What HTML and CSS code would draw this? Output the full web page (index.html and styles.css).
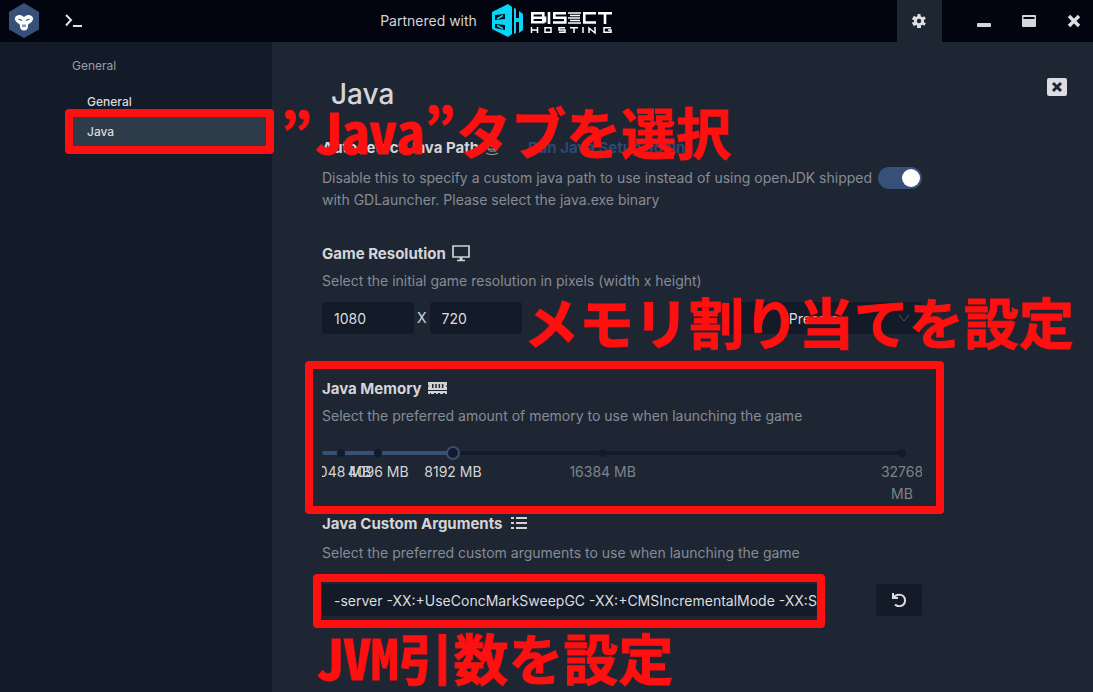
FILE: index.html
```html
<!DOCTYPE html>
<html lang="en">
<head>
<meta charset="utf-8">
<title>GDLauncher - Java settings</title>
<meta name="viewport" content="width=device-width, initial-scale=1">
<link rel="stylesheet" href="styles.css">
</head>
<body>
<header class="titlebar">
  <div class="titlebar-left">
    <svg class="logo" viewBox="0 0 32 36" width="32" height="36" aria-label="GDLauncher">
      <path fill="#375077" d="M16 0 31 9v17.500L16 35 1 26.500V9z"/>
      <path fill="#fff" d="M16 14c-2-1.500-4-2.500-6.500-1.500C6 13.500 6.500 17 8.500 19c1.500 1.500 3.500 1.500 3.500 4 0 3 1.500 4.500 4 4.500s4-1.500 4-4.500c0-2.500 2-2.500 3.500-4 2-2 2.500-5.500-1-6.500-2.500-1-4.500 0-6.500 1.500z"/>
      <path stroke="#375077" stroke-width="1.200" d="m10.500 16 3.500 1.500m7.500-1.500-3.500 1.500m-3 4v2.500m2-2.500v2.500"/>
    </svg>
    <button class="icon-btn" aria-label="Terminal">
      <svg viewBox="0 0 18 14" width="18" height="14" fill="none" stroke="#e0e0e2" stroke-width="2"><path d="m1 1 5 5-5 5.500M8 12h9"/></svg>
    </button>
  </div>
  <div class="partner">
    <span>Partnered with</span>
    <svg viewBox="0 0 122 36" width="122" height="36" role="img" aria-label="Bisect Hosting">
      <path fill="#06d5f7" fill-rule="evenodd" d="M17 2 1 10v17l16 8 4-3V5zM4 13l10-1v5L4 18zm0 9 10 1v5L4 26z"/>
      <path stroke="#06d5f7" stroke-width="1.500" d="m6 17 6-3.500M6 23.500l6 3"/>
      <path fill="#06d5f7" d="m23 6 2 1v9h3V9l4 3v16l-4 3V20h-3v11l-2 1z"/>
      <path fill="none" stroke="#fff" stroke-width="2.600" d="M41.300 11.300h11v9h-11zm0 4.500H54v4.700M58 10v12M75 11.300H63.300v4.500h11v4.700H62M105 11.300H93.300v9.200H105M107 11.300h14M114 12v10"/>
      <path stroke="#fff" stroke-width="1.500" d="M77 11h13M79 13.500h10M77 16h12M79 18.500h10M77 21h13"/>
      <path fill="none" stroke="#fff" stroke-width="1.500" d="M40.500 25v6m6-6v6m-6-3h6M54 25.700h6v4.600h-6zM74 25.700h-6V28h6v2.300h-6M79 25.700h8M83 25.700V31M92 25v6M98 31v-5l6 5v-6M120 25.700h-7v4.600h7V28h-3"/>
    </svg>
  </div>
  <nav class="window-controls">
    <button class="icon-btn active" aria-label="Settings">
      <svg viewBox="0 0 14 14" width="14" height="14"><g fill="#dedee0"><circle cx="7" cy="7" r="5"/><path d="M5.500 0h3l.5 14H5z"/><path d="M5.500 0h3l.5 14H5z" transform="rotate(60 7 7)"/><path d="M5.500 0h3l.5 14H5z" transform="rotate(120 7 7)"/></g><circle cx="7" cy="7" r="2.200" fill="#1e2633"/></svg>
    </button>
    <button class="icon-btn" aria-label="Minimize">
      <svg viewBox="0 0 14 14" width="14" height="14"><rect y="9" width="14" height="4" rx="1" fill="#d6d6da"/></svg>
    </button>
    <button class="icon-btn" aria-label="Maximize">
      <svg viewBox="0 0 14 14" width="14" height="14"><rect y="1" width="14" height="12" rx="1" fill="#d6d6da"/><path fill="#02040f" d="M1.500 3h11v2h-11z"/></svg>
    </button>
    <button class="icon-btn" aria-label="Close">
      <svg viewBox="0 0 14 14" width="14" height="14"><path d="m2 2 10 10M12 2 2 12" stroke="#dedee0" stroke-width="3.400"/></svg>
    </button>
  </nav>
</header>

<div class="layout">
  <aside class="sidebar">
    <h2>General</h2>
    <a href="#general">General</a>
    <a href="#java" class="selected">Java</a>
  </aside>

  <main class="main">
    <div class="content">
      <h1>Java</h1>

      <section class="autodetect">
        <h3>Autodetect Java Path
          <svg viewBox="0 0 14 16" width="14" height="16" fill="none" stroke="#a9adb3"><path d="M7 1c3 2-3 3 0 6M9 4c-2 1 1 2-1 3M3 9h7c-1 3-6 3-7 0zm7 0c3-1 2 3-1 2M1 13c3 2 9 2 12 0"/></svg>
          <a href="#setup">Run Java Setup again</a>
        </h3>
        <div class="row">
          <label for="auto">Disable this to specify a custom java path to use instead of using openJDK shipped with GDLauncher. Please select the java.exe binary</label>
          <input class="switch" id="auto" type="checkbox" role="switch" checked>
        </div>
      </section>

      <section class="resolution">
        <h3>Game Resolution
          <svg viewBox="0 0 18 18" width="18" height="18" fill="none" stroke="#d0d2d4" stroke-width="1.700"><path d="M1 1h16v11H1zM5 15.500h8"/><path stroke-width="3" d="M9 12v3"/></svg>
        </h3>
        <p>Select the initial game resolution in pixels (width x height)</p>
        <div class="row">
          <div class="size">
            <input class="field" type="text" value="1080" aria-label="Width">
            <span>X</span>
            <input class="field" type="text" value="720" aria-label="Height">
          </div>
          <div class="select">
            <select class="field" aria-label="Presets"><option>Presets</option></select>
            <svg viewBox="0 0 12 8" width="12" height="8" fill="none" stroke="#4f5763"><path d="m1 1 5 6 5-6"/></svg>
          </div>
        </div>
      </section>

      <section class="memory">
        <h3><label for="mem">Java Memory</label>
          <svg viewBox="0 0 20 16" width="20" height="16"><path fill="#d0d2d4" fill-rule="evenodd" d="M0 1h19v3l-1 1 1 1v3H0V6l1-1-1-1zm4 2v4h1.500V3zm3.300 0v4h1.500V3zm3.300 0v4h1.500V3zm3.300 0v4h1.500V3zM0 10h19v3h-2v-1h-2v1h-3v-1h-2v1H8v-1H6v1H3v-1H2v1H0z"/></svg>
        </h3>
        <p>Select the preferred amount of memory to use when launching the game</p>
        <div class="slider">
          <div class="rail">
            <div class="fill" style="width:22.580%"></div>
            <i style="left:3.230%"></i><i style="left:9.680%"></i><i style="left:48.390%"></i><i style="left:100%"></i>
            <input id="mem" type="range" min="1024" max="32768" value="8192">
          </div>
          <div class="marks">
            <span class="on" style="left:3.230%">2048 MB</span>
            <span class="on" style="left:9.680%">4096 MB</span>
            <span class="on" style="left:22.580%">8192 MB</span>
            <span style="left:48.390%">16384 MB</span>
            <span class="last" style="left:100%">32768 MB</span>
          </div>
        </div>
      </section>

      <section class="arguments">
        <h3><label for="args">Java Custom Arguments</label>
          <svg viewBox="0 0 20 16" width="20" height="16" stroke="#d0d2d4" stroke-width="2"><path d="M3 2h3M3 7h3M3 12h3M8 2h11M8 7h11M8 12h11"/></svg>
        </h3>
        <p>Select the preferred custom arguments to use when launching the game</p>
        <div class="row">
          <input class="field args" id="args" type="text" value="-server -XX:+UseConcMarkSweepGC -XX:+CMSIncrementalMode -XX:SurvivorRatio=8">
          <button class="reset" aria-label="Reset arguments">
            <svg viewBox="0 0 14 14" width="14" height="14" fill="none" stroke="#dedee0" stroke-width="2"><path d="M1 0v5h5M1.500 4.500C5 0 13 1 13 7.500c0 6-7 7-10 4"/></svg>
          </button>
        </div>
      </section>
    </div>
    <button class="close" aria-label="Close settings">
      <svg viewBox="0 0 20 18" width="20" height="18"><rect width="20" height="18" rx="2" fill="#dcdce2"/><path d="m6 5 8 8m0-8-8 8" stroke="#1e2633" stroke-width="3"/></svg>
    </button>
  </main>
</div>

<div class="frame frame-tab"></div>
<div class="frame frame-memory"></div>
<div class="frame frame-args"></div>
<div class="note note-tab" lang="ja"><span>”</span><span>Java”タブを選択</span></div>
<div class="note note-memory" lang="ja">メモリ割り当てを設定</div>
<div class="note note-args" lang="ja">JVM引数を設定</div>
</body>
</html>
```
FILE: styles.css
```css
* { box-sizing: border-box; }

body {
  margin: 0;
  min-height: 100vh;
  position: relative;
  display: flex;
  flex-direction: column;
  overflow: hidden;
  background: #1e2633;
  color: #d4d5d8;
  font: 14px/22px Inter, "Noto Sans CJK JP", sans-serif;
}

h1, h2, h3, p { margin: 0; }
button { border: 0; padding: 0; background: none; cursor: pointer; }
a { text-decoration: none; }
svg { flex: none; }

.titlebar {
  display: flex;
  justify-content: space-between;
  height: 42px;
  background: #02040f;
}
.titlebar-left { display: flex; align-items: center; gap: 11px; padding-left: 8px; }
.icon-btn {
  width: 45px;
  display: flex;
  align-items: center;
  justify-content: center;
}
.icon-btn.active { background: #1e2633; margin-right: 20px; }
.partner { display: flex; align-items: center; gap: 14px; }
.partner svg { margin-top: -2px; }
.window-controls { display: flex; justify-content: flex-end; margin-right: -4px; }

.layout { flex: 1; display: flex; }
.sidebar {
  width: 272px;
  flex: none;
  padding: 13px 0 0 72px;
  background: #131a28;
  display: flex;
  flex-direction: column;
  font-size: 12px;
}
.sidebar h2 { font-size: 12px; font-weight: 400; color: #9a9fa6; margin-bottom: 10px; }
.sidebar a { height: 30px; padding-left: 15px; line-height: 30px; color: #dadbdd; font-weight: 500; }
.sidebar a.selected { background: #2d3c48; }

.main {
  flex: 1;
  display: flex;
  justify-content: space-between;
  align-items: flex-start;
  padding: 36px 26px 0 50px;
}
.content { width: 600px; }
.close { display: flex; }
h1 { padding-left: 9px; font-size: 28px; line-height: 32px; font-weight: 500; }
h3 { display: flex; align-items: center; gap: 6px; font-size: 15px; line-height: 22px; font-weight: 700; }
h3 a { margin-left: 23px; color: #2f4872; }
p, .row label { font-size: 14px; color: #868c94; }
.row { display: flex; align-items: center; justify-content: space-between; }

.autodetect { margin-top: 27px; }
.autodetect .row { align-items: flex-start; margin-top: 8px; }
.autodetect label { width: 552px; }
.switch {
  appearance: none;
  width: 44px;
  height: 22px;
  margin: 0;
  padding: 2px;
  border-radius: 11px;
  background: #375077;
}
.switch::before {
  content: "";
  display: block;
  width: 18px;
  height: 18px;
  margin-left: auto;
  border-radius: 50%;
  background: #fff;
}

.resolution { margin-top: 32px; }
.resolution p, .memory p, .arguments p { margin-top: 5px; }
.resolution .row { margin-top: 10px; }
.size { display: flex; align-items: center; gap: 3px; }
.field {
  width: 92px;
  height: 32px;
  padding: 0 12px;
  border: 0;
  border-radius: 3px;
  background: #131a28;
  color: #dcdddf;
  font: 14px Inter, sans-serif;
}
.select { position: relative; width: 195px; }
.select select { appearance: none; width: 100%; padding: 0 34px 0 12px; text-align: center; }
.select svg { position: absolute; right: 12px; top: 12px; pointer-events: none; }

.memory { margin-top: 44px; }
.slider { margin-top: 19px; padding-right: 20px; overflow: hidden; }
.rail { position: relative; height: 14px; background: linear-gradient(#131a28, #131a28) center / 100% 4px no-repeat; }
.fill { position: absolute; left: 0; top: 5px; height: 4px; border-radius: 2px; background: #375077; }
.rail i {
  position: absolute;
  top: 3px;
  width: 8px;
  height: 8px;
  margin-left: -4px;
  border-radius: 50%;
  background: #131a28;
}
.rail input {
  appearance: none;
  position: absolute;
  left: -7px;
  top: 0;
  width: calc(100% + 14px);
  height: 14px;
  margin: 0;
  background: none;
}
.rail input::-webkit-slider-thumb {
  appearance: none;
  width: 14px;
  height: 14px;
  border: 2px solid #375077;
  border-radius: 50%;
  background: #131a28;
}
.marks { position: relative; height: 45px; margin-top: 1px; color: #7d838b; }
.marks span { position: absolute; transform: translateX(-50%); white-space: nowrap; text-align: center; }
.marks .on { color: #d4d5d8; }
.marks .last { width: 44px; white-space: normal; }

.arguments { margin-top: 7px; }
.arguments p { margin-top: 7px; }
.arguments .row { margin-top: 20px; }
.field.args { width: 495px; padding-right: 0; }
.reset {
  width: 46px;
  height: 32px;
  border-radius: 3px;
  background: #131a28;
  display: flex;
  align-items: center;
  justify-content: center;
}

/* Tutorial callouts laid over the window */
.frame { position: absolute; border: 8px solid #ff1010; border-radius: 4px; pointer-events: none; }
.frame-tab { left: 65px; top: 109px; width: 209px; height: 45px; }
.frame-memory { left: 305px; top: 361px; width: 639px; height: 153px; }
.frame-args { left: 313px; top: 574px; width: 512px; height: 54px; }
.note {
  position: absolute;
  display: flex;
  white-space: nowrap;
  color: #ff1010;
  font: 900 55px/55px "Noto Sans Mono CJK JP", "Noto Sans CJK JP", sans-serif;
  -webkit-text-stroke: 1px #ff1010;
  pointer-events: none;
}
.note-tab { left: 281px; top: 103px; gap: 2px; }
.note-memory { left: 524px; top: 293px; }
.note-args { left: 316px; top: 629px; }
```
